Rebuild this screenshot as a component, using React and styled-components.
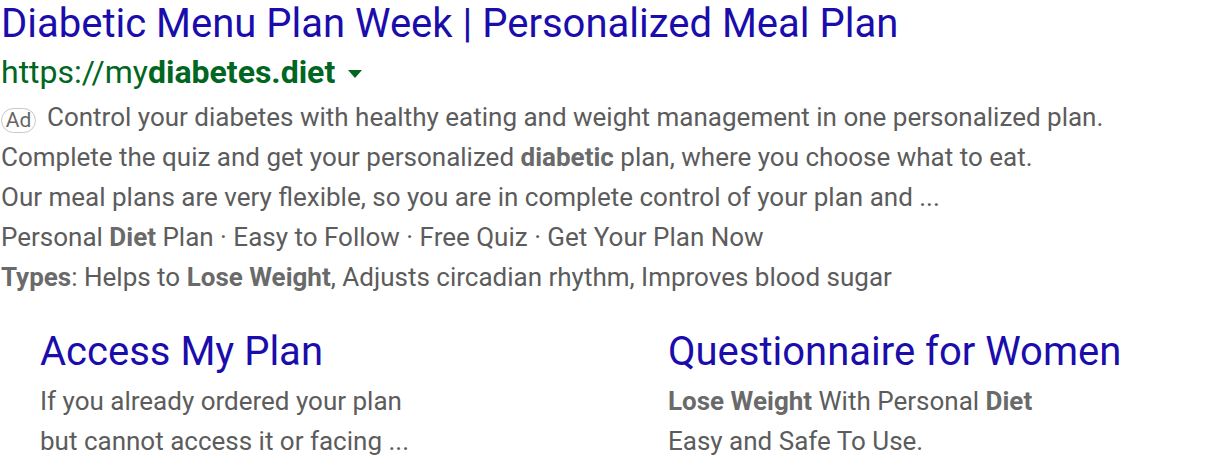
import React from "react";
import styled, { createGlobalStyle } from "styled-components";

const Global = createGlobalStyle`
  body {
    margin: 0;
    background: #fff;
    font-family: Roboto, "Liberation Sans", Arial, sans-serif;
  }
`;

const Ad = styled.div`
  width: 1216px;
  padding: 0 0 0 1px;
`;

const Title = styled.a`
  display: block;
  color: #1a0dab;
  font-size: 40px;
  line-height: 47px;
  text-decoration: none;
  white-space: nowrap;
`;

const Url = styled.div`
  display: flex;
  align-items: center;
  margin-top: 5px;
  color: #006621;
  font-size: 32px;
  line-height: 40px;
  & b {
    font-weight: 700;
  }
`;

const Caret = styled.span`
  display: inline-block;
  margin-left: 13px;
  margin-top: 4px;
  width: 0;
  height: 0;
  border-left: 7px solid transparent;
  border-right: 7px solid transparent;
  border-top: 8px solid #006621;
`;

const Body = styled.div`
  margin-top: 5px;
  color: #5c5c5c;
  font-size: 26px;
  line-height: 40px;
  & b {
    font-weight: 700;
    color: #6a6a6a;
  }
`;

const Line = styled.div`
  white-space: nowrap;
`;

const Badge = styled.span`
  display: inline-flex;
  align-items: center;
  justify-content: center;
  box-sizing: border-box;
  width: 35px;
  height: 25px;
  margin-right: 11px;
  border: 1.5px solid #c8c8c8;
  border-radius: 13px;
  font-size: 21px;
  line-height: 1;
  color: #666;
  vertical-align: -1px;
`;

const Sitelinks = styled.div`
  display: grid;
  grid-template-columns: 628px 1fr;
  margin-top: 31px;
  padding-left: 39px;
`;

const Sitelink = styled.div`
  display: flex;
  flex-direction: column;
`;

const LinkTitle = styled.a`
  color: #1a0dab;
  font-size: 40px;
  line-height: 47px;
  text-decoration: none;
  white-space: nowrap;
`;

const LinkDesc = styled.div`
  margin-top: 6px;
  color: #5c5c5c;
  font-size: 26px;
  line-height: 40px;
  & b {
    font-weight: 700;
    color: #6a6a6a;
  }
`;

export default function App() {
  return (
    <>
      <Global />
      <Ad>
        <Title href="#">Diabetic Menu Plan Week | Personalized Meal Plan</Title>
        <Url>
          <span>
            https://my<b>diabetes.diet</b>
          </span>
          <Caret />
        </Url>
        <Body>
          <Line>
            <Badge>Ad</Badge>Control your diabetes with healthy eating and weight
            management in one personalized plan.
          </Line>
          <Line>
            Complete the quiz and get your personalized <b>diabetic</b> plan, where
            you choose what to eat.
          </Line>
          <Line>
            Our meal plans are very flexible, so you are in complete control of your
            plan and ...
          </Line>
          <Line>
            Personal <b>Diet</b> Plan · Easy to Follow · Free Quiz · Get Your Plan Now
          </Line>
          <Line>
            <b>Types</b>: Helps to <b>Lose Weight</b>, Adjusts circadian rhythm,
            Improves blood sugar
          </Line>
        </Body>
        <Sitelinks>
          <Sitelink>
            <LinkTitle href="#">Access My Plan</LinkTitle>
            <LinkDesc>
              <Line>If you already ordered your plan</Line>
              <Line>but cannot access it or facing ...</Line>
            </LinkDesc>
          </Sitelink>
          <Sitelink>
            <LinkTitle href="#">Questionnaire for Women</LinkTitle>
            <LinkDesc>
              <Line>
                <b>Lose Weight</b> With Personal <b>Diet</b>
              </Line>
              <Line>Easy and Safe To Use.</Line>
            </LinkDesc>
          </Sitelink>
        </Sitelinks>
      </Ad>
    </>
  );
}
